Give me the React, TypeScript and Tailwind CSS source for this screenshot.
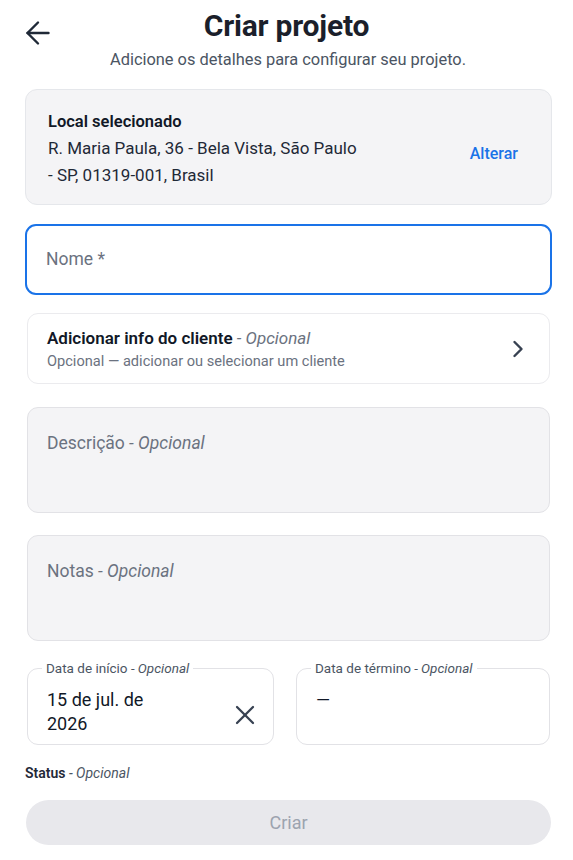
import { ArrowLeft, ChevronRight, X } from "lucide-react";

function Opt() {
  return <span className="italic font-normal"> - Opcional</span>;
}

export default function App() {
  return (
    <div className="min-h-[860px] bg-white font-['Roboto',sans-serif] text-[#111827]">
      <header className="relative pt-[10px]">
        <button className="absolute left-[20px] top-[15px] text-[#1f2937]">
          <ArrowLeft size={36} strokeWidth={1.6} />
        </button>
        <h1 className="text-center text-[30px] font-bold leading-[32px] tracking-[-0.2px] text-[#1b1f2b]">
          Criar projeto
        </h1>
        <p className="mt-[8px] pl-[3px] text-center text-[16.4px] leading-[20px] text-[#4b5563]">
          Adicione os detalhes para configurar seu projeto.
        </p>
      </header>

      <main className="flex flex-col px-[25px] pr-[21px] pt-[19px]">
        <section className="flex items-center justify-between rounded-[12px] border border-[#e5e7eb] bg-[#f4f4f6] pb-[15px] pl-[22px] pr-[33px] pt-[20px]">
          <div>
            <div className="text-[16.5px] font-semibold leading-[24px] text-[#111827]">Local selecionado</div>
            <div className="mt-[1px] w-[311px] text-[17px] leading-[27px] text-[#1f2937]">
              R. Maria Paula, 36 - Bela Vista, São Paulo - SP, 01319-001, Brasil
            </div>
          </div>
          <button className="mt-[8px] text-[16px] font-medium text-[#1a73e8]">Alterar</button>
        </section>

        <div className="mt-[19px] flex h-[71px] items-center rounded-[11px] border-2 border-[#1a73e8] px-[19px]">
          <span className="text-[17.5px] text-[#6b7280]">Nome *</span>
        </div>

        <div className="mx-[2px] mt-[18px] flex h-[71px] items-center justify-between rounded-[11px] border border-[#ebebee] pl-[19px] pr-[17px]">
          <div>
            <div className="text-[17px] font-semibold leading-[22px] text-[#111827]">
              Adicionar info do cliente<span className="italic font-normal text-[#6b7280]"> - Opcional</span>
            </div>
            <div className="mt-[3px] text-[14.6px] leading-[18px] text-[#6b7280]">
              Opcional — adicionar ou selecionar um cliente
            </div>
          </div>
          <ChevronRight size={28} strokeWidth={2.1} className="text-[#374151]" />
        </div>

        <div className="mx-[2px] mt-[23px] h-[106px] rounded-[11px] border border-[#e2e2e6] bg-[#f4f4f6] px-[19px] pt-[22px]">
          <span className="text-[17.5px] text-[#6b7280]">
            Descrição<Opt />
          </span>
        </div>

        <div className="mx-[2px] mt-[22px] h-[106px] rounded-[11px] border border-[#e2e2e6] bg-[#f4f4f6] px-[19px] pt-[22px]">
          <span className="text-[17.5px] text-[#6b7280]">
            Notas<Opt />
          </span>
        </div>

        <div className="mx-[2px] mt-[19px] grid grid-cols-[247px_1fr] gap-[22px]">
          <fieldset className="h-[85px] rounded-[11px] border border-[#e2e2e6] pl-[19px] pr-[12px]">
            <legend className="ml-[-5px] px-[4px] text-[13.5px] leading-[16px] text-[#4b5563]">
              Data de início<Opt />
            </legend>
            <div className="mt-[12px] flex items-center justify-between">
              <span className="w-[130px] text-[18px] leading-[24px] text-[#111827]">15 de jul. de 2026</span>
              <X size={32} strokeWidth={1.7} className="mt-[6px] text-[#374151]" />
            </div>
          </fieldset>
          <fieldset className="h-[85px] rounded-[11px] border border-[#e2e2e6] pl-[19px]">
            <legend className="ml-[-5px] px-[4px] text-[13.5px] leading-[16px] text-[#4b5563]">
              Data de término<Opt />
            </legend>
            <div className="mt-[12px] text-[18px] leading-[24px] text-[#111827]">—</div>
          </fieldset>
        </div>

        <div className="mt-[19px] text-[14px] font-semibold leading-[18px] text-[#1f2937]">
          Status<span className="italic font-normal text-[#4b5563]"> - Opcional</span>
        </div>

        <button className="mx-[1px] mt-[18px] h-[45px] rounded-[23px] bg-[#e8e8ec] text-[18px] text-[#9ca3af]">
          Criar
        </button>
      </main>
    </div>
  );
}
